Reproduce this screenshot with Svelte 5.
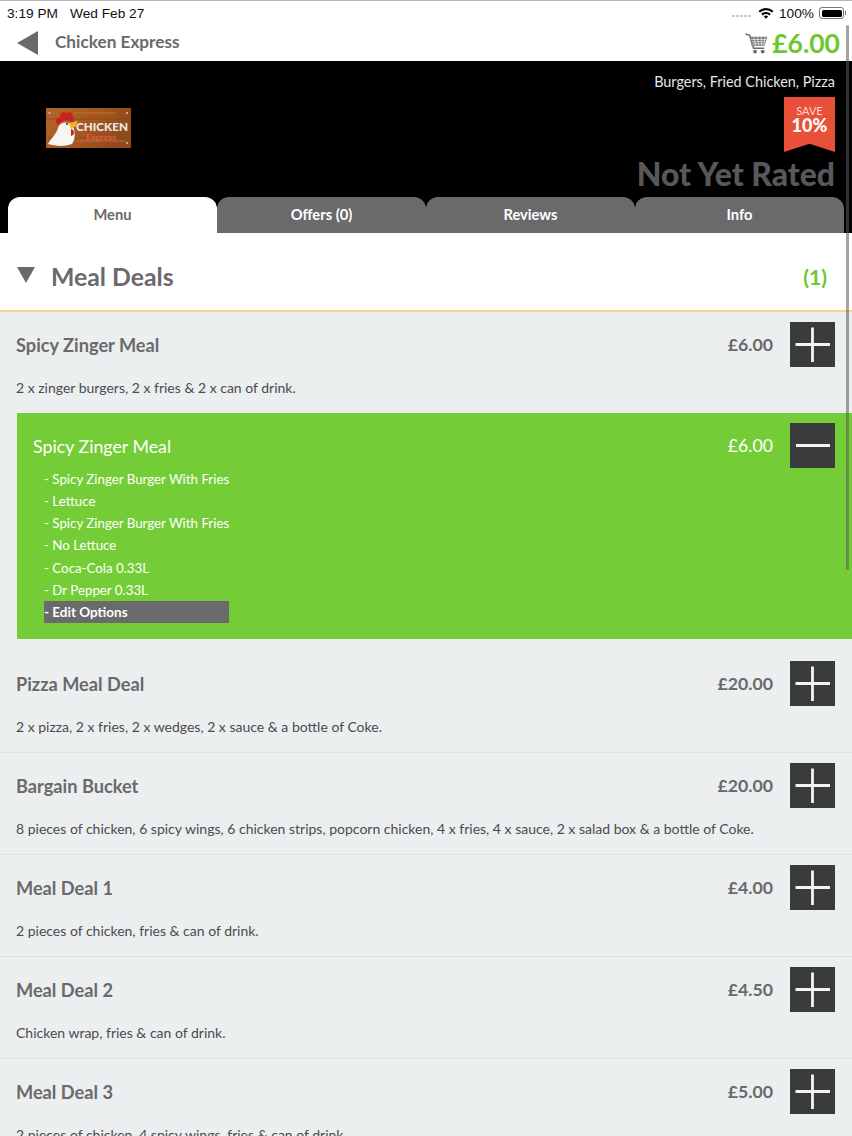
<script lang="ts">
	interface Deal {
		name: string
		price: string
		desc: string
	}

	const tabs = ['Menu', 'Offers (0)', 'Reviews', 'Info']

	const options = [
		'Spicy Zinger Burger With Fries',
		'Lettuce',
		'Spicy Zinger Burger With Fries',
		'No Lettuce',
		'Coca-Cola 0.33L',
		'Dr Pepper 0.33L',
	]

	const deals: Deal[] = [
		{ name: 'Pizza Meal Deal', price: '£20.00', desc: '2 x pizza, 2 x fries, 2 x wedges, 2 x sauce & a bottle of Coke.' },
		{
			name: 'Bargain Bucket',
			price: '£20.00',
			desc: '8 pieces of chicken, 6 spicy wings, 6 chicken strips, popcorn chicken, 4 x fries, 4 x sauce, 2 x salad box & a bottle of Coke.',
		},
		{ name: 'Meal Deal 1', price: '£4.00', desc: '2 pieces of chicken, fries & can of drink.' },
		{ name: 'Meal Deal 2', price: '£4.50', desc: 'Chicken wrap, fries & can of drink.' },
		{ name: 'Meal Deal 3', price: '£5.00', desc: '2 pieces of chicken, 4 spicy wings, fries & can of drink.' },
	]
</script>

{#snippet addButton()}
	<button class="qty" aria-label="Add">
		<svg viewBox="0 0 45 45" width="45" height="45">
			<path d="M5.500 22.500 H40 M22.500 5.500 V40" stroke="#f4f4f4" stroke-width="2.800" fill="none" />
		</svg>
	</button>
{/snippet}

<div class="page">
	<div class="status">
		<span class="clock">3:19 PM</span>
		<span class="date">Wed Feb 27</span>
		<span class="status-right">
			<span class="signal">
				<i></i><i></i><i></i><i></i><i></i>
			</span>
			<svg class="wifi" viewBox="0 0 16 12" width="16" height="12">
				<path d="M0.500 4 A11 11 0 0 1 15.500 4 L14 5.600 A9 9 0 0 0 2 5.600 Z" fill="#000" />
				<path d="M3.200 6.800 A7.200 7.200 0 0 1 12.800 6.800 L11.300 8.400 A5 5 0 0 0 4.700 8.400 Z" fill="#000" />
				<path d="M5.800 9.400 A3.500 3.500 0 0 1 10.200 9.400 L8 11.700 Z" fill="#000" />
			</svg>
			<span class="battery-text">100%</span>
			<span class="battery"><span class="battery-fill"></span></span>
			<span class="battery-cap"></span>
		</span>
	</div>

	<header class="nav">
		<svg class="back" viewBox="0 0 22 24" width="22" height="24">
			<path d="M0 12 L21 0 V24 Z" fill="#6a696c" />
		</svg>
		<span class="nav-title">Chicken Express</span>
		<svg class="cart" viewBox="0 0 24 22" width="23" height="21">
			<path d="M0.500 1 L5 2.500 L9 16 H20" fill="none" stroke="#6a696c" stroke-width="1.500" />
			<path d="M4.500 4 H23.500 L20.500 13.500 H7 Z" fill="#7c7b7e" />
			<path
				d="M6 6.800 H22.500 M7 9.200 H21.800 M7.600 11.500 H21 M9 4 L11 13.500 M13 4 L14.200 13.500 M17 4 L17.200 13.500 M21 4 L19.500 13.500"
				stroke="#fff"
				stroke-width="0.600"
				fill="none"
			/>
			<circle cx="10.500" cy="19.500" r="2" fill="#6a696c" />
			<circle cx="18.500" cy="19.500" r="2" fill="#6a696c" />
		</svg>
		<span class="total">£6.00</span>
	</header>

	<section class="hero">
		<svg class="logo" viewBox="0 0 85 40" width="85" height="40">
			<defs>
				<linearGradient id="wood" x1="0" y1="0" x2="1" y2="0.300">
					<stop offset="0" stop-color="#b3652a" />
					<stop offset="0.600" stop-color="#a5561f" />
					<stop offset="1" stop-color="#8e4a1c" />
				</linearGradient>
			</defs>
			<rect width="85" height="40" rx="1" fill="url(#wood)" />
			<path d="M0 11 H85 M0 30 H85" stroke="#8a4516" stroke-width="0.700" />
			<path d="M28 5 H70 M30 33 H80" stroke="#c17a3e" stroke-width="0.800" />
			<path d="M2 36 C5 30 10 27 12 20 C13 14 22 12 27 18 C29 24 30 30 26 36 C18 39 9 38 2 36 Z" fill="#f7f6f2" />
			<path d="M11 16 C8 11 12 9 14 9 C14 4 18 3 20 5 C23 3 27 5 26 8 C29 9 29 13 26 14 C22 11 15 12 13 17 Z" fill="#c9231d" />
			<circle cx="21" cy="16" r="1" fill="#222" />
			<path d="M23 15 L32 13 L30 18 L25 21 Z" fill="#f2b51c" />
			<path d="M25 21 C29 22 29 27 25 28 Z" fill="#c9231d" />
			<text x="30" y="23" class="logo-name" textLength="52" lengthAdjust="spacingAndGlyphs">CHICKEN</text>
			<text x="40" y="32" class="logo-sub" textLength="30" lengthAdjust="spacingAndGlyphs">Express</text>
			<circle cx="3.500" cy="5" r="1" fill="#d8c7b0" />
			<circle cx="81" cy="5" r="1" fill="#d8c7b0" />
			<circle cx="81" cy="35" r="1" fill="#d8c7b0" />
		</svg>
		<div class="hero-info">
			<p class="cuisine">Burgers, Fried Chicken, Pizza</p>
			<div class="ribbon">
				<span class="save">SAVE</span>
				<span class="percent">10%</span>
			</div>
			<p class="rating">Not Yet Rated</p>
		</div>
		<nav class="tabs">
			{#each tabs as tab, i}
				<div class="tab" class:active={i === 0}>{tab}</div>
			{/each}
		</nav>
	</section>

	<div class="section-head">
		<svg viewBox="0 0 18 16" width="18" height="16">
			<path d="M0 0 H18 L9 16 Z" fill="#6a696c" />
		</svg>
		<h2>Meal Deals</h2>
		<span class="count">(1)</span>
	</div>

	<div class="list">
		<article class="item first">
			<div class="row">
				<h3>Spicy Zinger Meal</h3>
				<span class="price">£6.00</span>
				{@render addButton()}
			</div>
			<p class="desc">2 x zinger burgers, 2 x fries &amp; 2 x can of drink.</p>
		</article>

		<div class="selected">
			<div class="row">
				<h3>Spicy Zinger Meal</h3>
				<span class="price">£6.00</span>
				<button class="qty" aria-label="Remove">
					<svg viewBox="0 0 45 45" width="45" height="45">
						<path d="M6 22.500 H40" stroke="#f4f4f4" stroke-width="3" fill="none" />
					</svg>
				</button>
			</div>
			<ul class="options">
				{#each options as option}
					<li>- {option}</li>
				{/each}
				<li class="edit">- Edit Options</li>
			</ul>
		</div>

		{#each deals as deal}
			<article class="item">
				<div class="row">
					<h3>{deal.name}</h3>
					<span class="price">{deal.price}</span>
					{@render addButton()}
				</div>
				<p class="desc">{deal.desc}</p>
			</article>
		{/each}
	</div>

	<div class="scrollbar"></div>
</div>

<style>
	:global(body) {
		margin: 0;
	}

	.page {
		position: relative;
		width: 852px;
		height: 1136px;
		overflow: hidden;
		background: #fff;
		font-family: Lato, 'Open Sans', sans-serif;
		color: #6a696c;
	}

	.status {
		display: flex;
		align-items: center;
		height: 24px;
		box-sizing: border-box;
		padding: 1px 6px 0 7px;
		border-top: 1px solid #b5b5b5;
		color: #111;
		font-family: 'Liberation Sans', Arial, sans-serif;
		font-size: 13.700px;
	}

	.date {
		margin-left: 12px;
	}

	.status-right {
		display: flex;
		align-items: center;
		margin-left: auto;
	}

	.signal {
		display: flex;
		gap: 1.500px;
		margin-right: 7px;
		padding-top: 6px;
	}

	.signal i {
		width: 2.500px;
		height: 2.500px;
		border-radius: 50%;
		background: #c4c4c4;
	}

	.battery-text {
		margin-left: 5px;
	}

	.battery {
		display: flex;
		width: 25px;
		height: 12px;
		box-sizing: border-box;
		margin-left: 5px;
		padding: 1.500px;
		border: 1px solid #777;
		border-radius: 3px;
	}

	.battery-fill {
		flex: 1;
		border-radius: 1.500px;
		background: #000;
	}

	.battery-cap {
		width: 1px;
		height: 4px;
		margin-left: 1px;
		background: #777;
	}

	.nav {
		display: flex;
		align-items: center;
		height: 37px;
		padding: 0 12px 0 17px;
	}

	.back {
		margin-right: 16px;
	}

	.nav-title {
		margin-top: -2px;
		font-size: 17.200px;
		font-weight: 700;
	}

	.cart {
		margin-left: auto;
		margin-right: 4px;
		margin-top: 1px;
	}

	.total {
		color: #6cc82e;
		font-size: 26.500px;
		font-weight: 700;
	}

	.hero {
		position: relative;
		display: flex;
		flex-wrap: wrap;
		justify-content: space-between;
		height: 172px;
		box-sizing: border-box;
		padding: 0 0 0 46px;
		background: #000;
	}

	.logo {
		margin-top: 47px;
	}

	.logo-name {
		fill: #e9e9e4;
		font-size: 12px;
		font-weight: 900;
	}

	.logo-sub {
		fill: #e8584c;
		font-size: 7px;
		font-weight: 700;
	}

	.hero-info {
		display: flex;
		flex-direction: column;
		align-items: flex-end;
		height: 136px;
		box-sizing: border-box;
		padding: 12px 17px 0 0;
	}

	.cuisine {
		margin: 0;
		color: #e6e6e6;
		font-size: 14.400px;
		line-height: 18px;
	}

	.ribbon {
		display: flex;
		flex-direction: column;
		align-items: center;
		width: 51px;
		height: 55px;
		box-sizing: border-box;
		margin-top: 6px;
		padding-top: 8px;
		background: #e8503a;
		clip-path: polygon(0 0, 100% 0, 100% 100%, 50% 85%, 0 100%);
		color: #fff;
	}

	.save {
		font-size: 11px;
		line-height: 11px;
		color: #f6d9d2;
	}

	.percent {
		margin-top: 1px;
		font-size: 18px;
		font-weight: 900;
		line-height: 16px;
	}

	.rating {
		margin: 4px 0 0;
		color: #58575a;
		font-size: 31.900px;
		font-weight: 900;
		line-height: 37px;
		white-space: nowrap;
	}

	.tabs {
		position: absolute;
		left: 8px;
		right: 8px;
		bottom: 0;
		display: flex;
		gap: 0;
	}

	.tab {
		flex: 1;
		height: 36px;
		border-radius: 12px 12px 0 0;
		background: #6a696c;
		color: #fff;
		font-size: 14.700px;
		font-weight: 700;
		line-height: 34px;
		text-align: center;
	}

	.tab.active {
		background: #fff;
		color: #6a696c;
	}

	.section-head {
		display: flex;
		align-items: center;
		height: 79px;
		padding: 10px 25px 0 17px;
		box-sizing: border-box;
		border-bottom: 2px solid #fbd28f;
	}

	.section-head svg {
		margin: -3px 16px 0 0;
	}

	.section-head h2 {
		margin: 0;
		font-size: 24.800px;
		font-weight: 700;
	}

	.count {
		margin-left: auto;
		color: #6cc82e;
		font-size: 21px;
		font-weight: 700;
	}

	.list {
		background: #ebeff0;
	}

	.item {
		height: 102px;
		box-sizing: border-box;
		padding: 10px 17px 0 16px;
		border-bottom: 1px solid #dfe2e4;
	}

	.item.first {
		height: 101px;
		border-bottom: 0;
	}

	.row {
		display: flex;
		align-items: center;
		height: 45px;
	}

	.row h3 {
		flex: 1;
		margin: 0;
		font-size: 18.200px;
		font-weight: 700;
	}

	.price {
		margin-right: 17px;
		font-size: 17.700px;
		font-weight: 700;
	}

	.qty {
		display: block;
		width: 45px;
		height: 45px;
		padding: 0;
		border: 0;
		background: #3a3b3d;
	}

	.qty svg {
		display: block;
	}

	.desc {
		margin: 11px 0 0;
		color: #4c4b4e;
		font-size: 14px;
		line-height: 20px;
		white-space: nowrap;
	}

	.selected {
		height: 226px;
		box-sizing: border-box;
		margin-left: 17px;
		margin-bottom: 12px;
		padding: 10px 17px 0 16px;
		background: #74cd37;
		color: #fff;
	}

	.selected h3 {
		font-size: 17.800px;
		font-weight: 400;
	}

	.selected .price {
		font-weight: 400;
	}

	.options {
		margin: 0;
		padding: 0 0 0 11px;
		list-style: none;
		font-size: 13.300px;
		line-height: 22px;
	}

	.options li {
		width: 185px;
		height: 22.170px;
		white-space: nowrap;
	}

	.options .edit {
		background: #6a696c;
		font-size: 13.500px;
		font-weight: 700;
	}

	.scrollbar {
		position: absolute;
		top: 25px;
		right: 3px;
		width: 3px;
		height: 545px;
		border-radius: 2px;
		background: rgba(90, 90, 90, 0.55);
	}
</style>
